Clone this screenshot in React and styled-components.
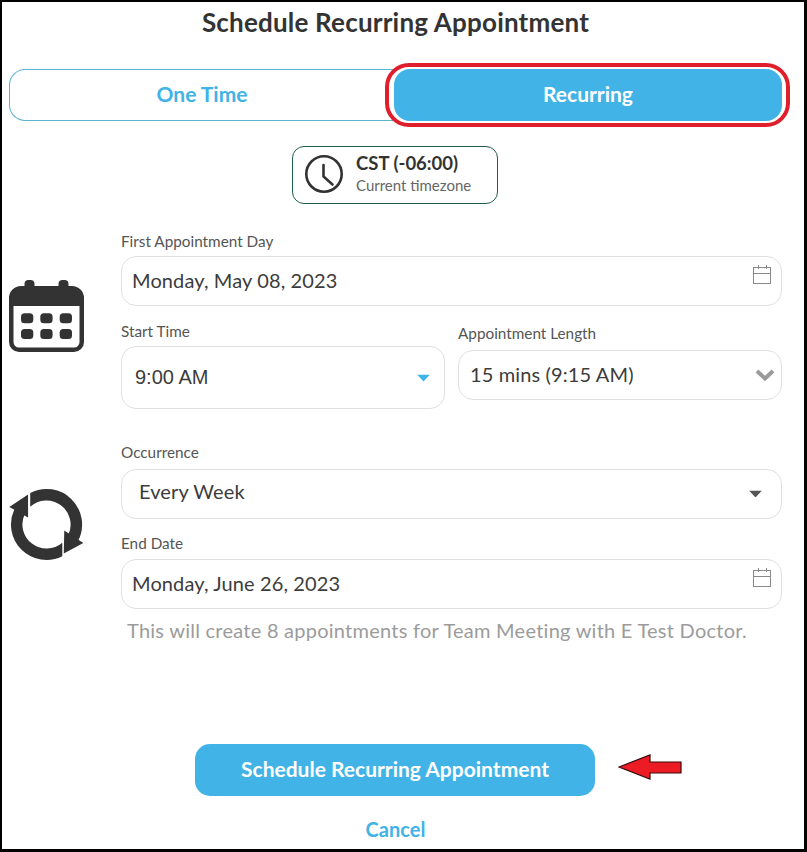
import styled, { createGlobalStyle } from 'styled-components'

const BLUE = '#41b3e6'
const DARK = '#333333'

const GlobalStyle = createGlobalStyle`
    html, body {
        margin: 0;
        padding: 0;
        background: #fff;
    }
    body {
        font-family: "Lato", "Open Sans", sans-serif;
        color: ${DARK};
    }
`

const CalendarIcon = () => (
    <BigIcon viewBox="0 0 75 72" width="75" height="72">
        <rect x="15.5" y="0" width="10" height="12" rx="4" fill={DARK} />
        <rect x="49.5" y="0" width="10" height="12" rx="4" fill={DARK} />
        <path fillRule="evenodd" fill={DARK} d="M12 6H63a12 12 0 0 1 12 12V62a10 10 0 0 1-10 10H10A10 10 0 0 1 0 62V18A12 12 0 0 1 12 6ZM4.5 26V62a5.5 5.5 0 0 0 5.5 5.5H65a5.5 5.5 0 0 0 5.5-5.5V26Z" />
        {[12, 31.3, 50.7].map(x => [33.3, 49].map(y => (
            <rect key={`${x}-${y}`} x={x} y={y} width="12.3" height="10" rx="3.5" fill={DARK} />
        )))}
    </BigIcon>
)

const RecurIcon = () => (
    <BigIcon viewBox="0 0 76 74" width="76" height="74">
        <path fill={DARK} d="M21.5 4.5A36 36 0 0 1 70.3 52.5L60.1 47A24.5 24.5 0 0 0 21.5 18.4Z" />
        <path fill={DARK} d="M5.5 21A36 36 0 0 0 54 68.7L54 55A24.5 24.5 0 0 1 15.9 26Z" />
        <polygon points="19.3,6 0.3,18.7 19.3,29.3" fill={DARK} />
        <polygon points="56,42.7 75.3,55.3 55.5,66" fill={DARK} />
    </BigIcon>
)

const ClockIcon = () => (
    <ClockSvg viewBox="0 0 40 40" width="40" height="40">
        <circle cx="20" cy="20" r="17.7" fill="none" stroke={DARK} strokeWidth="2.6" />
        <path d="M19.5 11V22.5L28.5 30.5" fill="none" stroke={DARK} strokeWidth="2.6" strokeLinecap="round" />
    </ClockSvg>
)

const DateIcon = () => (
    <SmallIcon viewBox="0 0 18 19" width="18" height="19">
        <rect x="0.5" y="2.5" width="17" height="16" fill="none" stroke="#8a8a8a" />
        <path d="M0.5 8.5H17.5M5.5 0V4M13.5 0V4" fill="none" stroke="#8a8a8a" />
    </SmallIcon>
)

const Caret = ({ color }) => (
    <SmallIcon viewBox="0 0 13 7" width="13" height="7">
        <path d="M0 0H13L6.5 7Z" fill={color} />
    </SmallIcon>
)

const Chevron = () => (
    <SmallIcon viewBox="0 0 20 13" width="20" height="13">
        <path d="M2 2.5L10 10L18 2.5" fill="none" stroke="#9a9a9a" strokeWidth="4" />
    </SmallIcon>
)

const App = () => (
    <>
        <GlobalStyle />
        <Frame>
            <Title>Schedule Recurring Appointment</Title>
            <Tabs>
                <Tab>One Time</Tab>
                <Tab $active>Recurring</Tab>
                <RedRing />
            </Tabs>
            <Chip>
                <ClockIcon />
                <ChipText>
                    <ChipTitle>CST (-06:00)</ChipTitle>
                    <ChipSub>Current timezone</ChipSub>
                </ChipText>
            </Chip>

            <Section $top={29}>
                <IconCell $shift={-5}><CalendarIcon /></IconCell>
                <Fields>
                    <Label $gap={5}>First Appointment Day</Label>
                    <Field $pad={10}>
                        Monday, May 08, 2023
                        <DateSlot><DateIcon /></DateSlot>
                    </Field>
                    <TwoCols>
                        <div>
                            <Label $top={17} $gap={5}>Start Time</Label>
                            <Field $pad={13} $height={63} $lift={0} $arial>
                                9:00 AM
                                <EndSlot $right={14}><Caret color={BLUE} /></EndSlot>
                            </Field>
                        </div>
                        <div>
                            <Label $top={19} $gap={7}>Appointment Length</Label>
                            <Field $pad={11}>
                                15 mins (9:15 AM)
                                <EndSlot $right={6}><Chevron /></EndSlot>
                            </Field>
                        </div>
                    </TwoCols>
                </Fields>
            </Section>

            <Section $top={35}>
                <IconCell $shift={-2}><RecurIcon /></IconCell>
                <Fields>
                    <Label $gap={7}>Occurrence</Label>
                    <Field $pad={17} $lift={7}>
                        Every Week
                        <EndSlot $right={19}><Caret color="#555555" /></EndSlot>
                    </Field>
                    <Label $top={16} $gap={6}>End Date</Label>
                    <Field $pad={10}>
                        Monday, June 26, 2023
                        <DateSlot><DateIcon /></DateSlot>
                    </Field>
                </Fields>
            </Section>

            <Hint>This will create 8 appointments for Team Meeting with E Test Doctor.</Hint>

            <Submit>
                Schedule Recurring Appointment
                <Arrow viewBox="0 0 65 26" width="65" height="26">
                    <polygon points="1,13 32,1 32,8 63,8 63,19 32,19 32,25" fill="#ed1c24" stroke="#3a0a0a" strokeWidth="1.2" />
                </Arrow>
            </Submit>
            <Cancel>Cancel</Cancel>
        </Frame>
    </>
)

export default App

const Frame = styled.div`
    box-sizing: border-box;
    width: 807px;
    height: 852px;
    padding: 0 22px 0 7px;
    border-style: solid;
    border-color: #000;
    border-width: 2px 3px 3px 2px;
    display: flex;
    flex-direction: column;
    overflow: hidden;
    background: #fff;
`

const Title = styled.h1`
    margin: 0;
    height: 42px;
    line-height: 40px;
    font-size: 26px;
    letter-spacing: 0.2px;
    font-weight: 700;
    text-align: center;
    color: ${DARK};
`

const Tabs = styled.div`
    position: relative;
    margin-top: 25px;
    height: 52px;
    display: grid;
    grid-template-columns: 385px 388px;
`

const Tab = styled.div`
    box-sizing: border-box;
    display: flex;
    align-items: center;
    justify-content: center;
    padding-bottom: 4px;
    font-size: 21px;
    font-weight: 700;
    color: ${p => (p.$active ? '#fff' : BLUE)};
    background: ${p => (p.$active ? BLUE : '#fff')};
    border: ${p => (p.$active ? 'none' : '1px solid #5ab4d2')};
    border-right: none;
    border-radius: ${p => (p.$active ? '16px' : '16px 0 0 16px')};
`

const RedRing = styled.div`
    position: absolute;
    top: -6px;
    bottom: -6px;
    left: 376px;
    right: -8px;
    border: 4px solid #e01f2d;
    border-radius: 24px;
`

const Chip = styled.div`
    box-sizing: border-box;
    align-self: flex-start;
    margin: 25px 0 0 283px;
    width: 206px;
    height: 58px;
    padding-left: 11px;
    display: flex;
    align-items: center;
    gap: 12px;
    border: 1px solid #1d5e4a;
    border-radius: 12px;
`

const ClockSvg = styled.svg`
    display: block;
    margin-bottom: 3px;
`

const ChipText = styled.div`
    display: flex;
    flex-direction: column;
    gap: 3px;
    padding-bottom: 4px;
`

const ChipTitle = styled.div`
    font-size: 18.5px;
    font-weight: 700;
    line-height: 20px;
`

const ChipSub = styled.div`
    font-size: 15px;
    line-height: 18px;
    color: #666;
`

const Section = styled.div`
    margin-top: ${p => p.$top}px;
    display: grid;
    grid-template-columns: 75px 661px;
    column-gap: 37px;
`

const IconCell = styled.div`
    display: flex;
    align-items: center;
    transform: translateY(${p => p.$shift || 0}px);
`

const BigIcon = styled.svg`
    display: block;
`

const SmallIcon = styled.svg`
    display: block;
`

const Fields = styled.div`
    display: flex;
    flex-direction: column;
`

const TwoCols = styled.div`
    display: grid;
    grid-template-columns: 324px 324px;
    column-gap: 13px;
    align-items: start;
`

const Label = styled.div`
    margin-top: ${p => p.$top || 0}px;
    margin-bottom: ${p => p.$gap}px;
    height: 18px;
    line-height: 16px;
    font-size: 15.3px;
    color: #555;
`

const Field = styled.div`
    position: relative;
    box-sizing: border-box;
    height: ${p => p.$height || 50}px;
    padding-left: ${p => p.$pad}px;
    padding-bottom: ${p => p.$lift ?? 2}px;
    display: flex;
    align-items: center;
    font-family: ${p => (p.$arial ? '"Liberation Sans", Arial, sans-serif' : 'inherit')};
    font-size: 20px;
    letter-spacing: ${p => (p.$arial ? 0 : '0.12px')};
    color: #3c3c3c;
    border: 1px solid #e0e0e0;
    border-radius: 15px;
`

const DateSlot = styled.span`
    position: absolute;
    top: 8px;
    right: 10px;
`

const EndSlot = styled.span`
    position: absolute;
    top: 50%;
    right: ${p => p.$right}px;
    transform: translateY(-50%);
`

const Hint = styled.p`
    margin: 10px 0 0 118px;
    height: 24px;
    line-height: 22px;
    font-size: 20px;
    letter-spacing: 0.25px;
    color: #9b9b9b;
    white-space: nowrap;
`

const Submit = styled.button`
    position: relative;
    align-self: flex-start;
    margin: 101px 0 0 186px;
    width: 400px;
    height: 52px;
    padding: 0 0 4px;
    border: none;
    border-radius: 15px;
    background: ${BLUE};
    color: #fff;
    font-family: inherit;
    font-size: 21px;
    font-weight: 700;
`

const Arrow = styled.svg`
    position: absolute;
    left: 423px;
    top: 10px;
`

const Cancel = styled.div`
    margin: 22px 0 0;
    height: 24px;
    line-height: 22px;
    text-align: center;
    font-size: 20px;
    font-weight: 700;
    color: ${BLUE};
`
